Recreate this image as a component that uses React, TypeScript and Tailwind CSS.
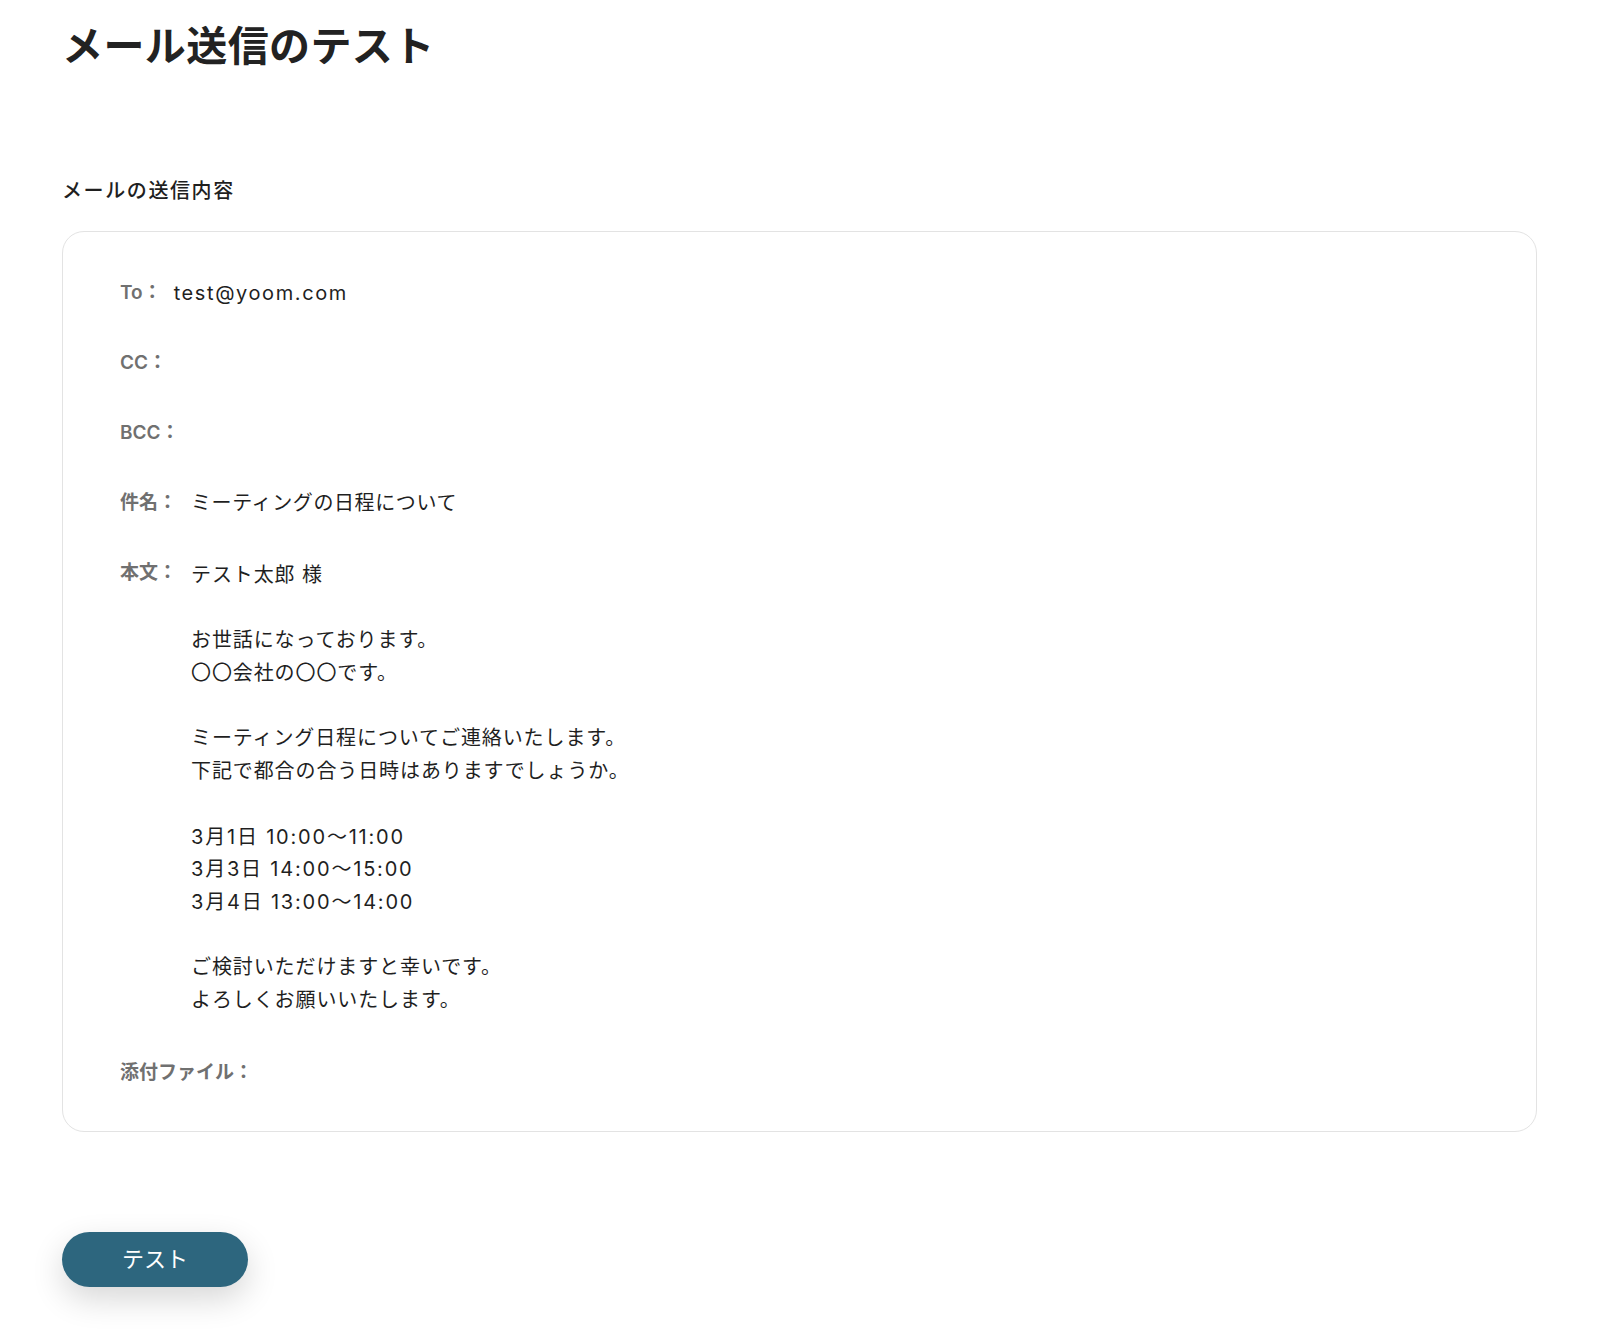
const bodyLines = [
  "テスト太郎 様",
  "",
  "お世話になっております。",
  "〇〇会社の〇〇です。",
  "",
  "ミーティング日程についてご連絡いたします。",
  "下記で都合の合う日時はありますでしょうか。",
  "",
  "3月1日 10:00〜11:00",
  "3月3日 14:00〜15:00",
  "3月4日 13:00〜14:00",
  "",
  "ご検討いただけますと幸いです。",
  "よろしくお願いいたします。",
];

// Latin-heavy lines get a little more tracking so they run as wide as the original
const isLatin = (s: string) => /\d{2}:\d{2}/.test(s);

function Label({ children }: { children: React.ReactNode }) {
  return (
    <span className="shrink-0 text-[19px] leading-[28px] font-semibold text-[#707070]">{children}</span>
  );
}

function Row({ label, value, latin }: { label: string; value?: string; latin?: boolean }) {
  return (
    <div className="flex items-center h-[33px]">
      <Label>{label}</Label>
      {value && (
        <span className={latin ? "ml-3 text-[20px] tracking-[0.08em] text-[#1f1f1f]" : "ml-[14px] text-[20px] tracking-[0.03em] text-[#1f1f1f]"}>
          {value}
        </span>
      )}
    </div>
  );
}

export default function App() {
  return (
    <div
      className="min-h-[1332px] bg-white px-[62px] pt-[16px]"
      style={{ fontFamily: '"Inter", "Noto Sans CJK JP", sans-serif' }}
    >
      <h1 className="text-[41px] leading-[60px] font-semibold tracking-[0.01em] text-[#222222]">メール送信のテスト</h1>

      <h2 className="mt-[100px] text-[20px] leading-[30px] font-medium tracking-[0.08em] text-[#1f1f1f]">メールの送信内容</h2>

      <div className="mt-[25px] w-[1475px] rounded-[22px] border border-[#e3e3e3] pl-[57px] pr-8 pt-[44px] pb-[41px]">
        <div className="flex flex-col gap-[37px]">
          <Row label="To：" value="test@yoom.com" latin />
          <Row label="CC：" />
          <Row label="BCC：" />
          <Row label="件名：" value="ミーティングの日程について" />
          <div className="mt-[3px] flex items-start">
            <Label>本文：</Label>
            <div className="ml-[14px] text-[20px] text-[#1f1f1f]">
              {bodyLines.map((line, i) => (
                <div
                  key={i}
                  className={isLatin(line) ? "h-[32.7px] leading-[32.7px] tracking-[0.09em]" : "h-[32.7px] leading-[32.7px] tracking-[0.045em]"}
                >
                  {line}
                </div>
              ))}
            </div>
          </div>
          <div className="mt-[3px]">
            <Row label="添付ファイル：" />
          </div>
        </div>
      </div>

      <button className="mt-[100px] h-[55px] w-[186px] rounded-full bg-[#2d667e] text-[22px] text-white shadow-[0_12px_32px_rgba(0,0,0,0.16)]">
        テスト
      </button>
    </div>
  );
}
